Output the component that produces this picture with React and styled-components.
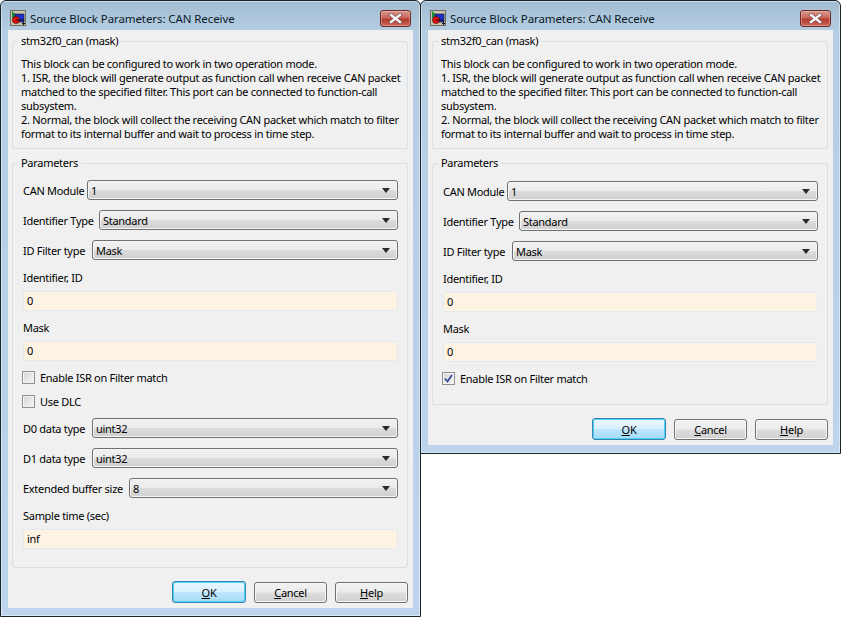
import React from "react";
import styled, { createGlobalStyle } from "styled-components";

const GlobalStyle = createGlobalStyle`
  html, body { margin: 0; padding: 0; background: #fff; }
  body { font-family: "Noto Sans", "Liberation Sans", sans-serif; font-size: 11px; letter-spacing: -0.29px; color: #000; }
`;

const description = [
  "This block can be configured to work in two operation mode.",
  "1. ISR, the block will generate output as function call when receive CAN packet",
  "matched to the specified filter. This port can be connected to function-call",
  "subsystem.",
  "2. Normal, the block will collect the receiving CAN packet which match to filter",
  "format to its internal buffer and wait to process in time step.",
];

const Desktop = styled.div`
  display: flex;
  align-items: flex-start;
  width: 850px;
  height: 617px;
  overflow: hidden;
`;
const Window = styled.div`
  box-sizing: border-box;
  width: 421px;
  height: ${(p) => p.$height}px;
  flex: none;
  display: flex;
  flex-direction: column;
  margin-left: ${(p) => (p.$overlap ? -1 : 0)}px;
  border: 1px solid #16242c;
  border-radius: 6px 6px 0 0;
  padding: 0 7px 8px;
  background: linear-gradient(180deg, #a3bdd3 0, #b4cde3 30px, #bcd4ec 100%);
  box-shadow: inset 0 0 0 1px rgba(255, 255, 255, 0.45);
`;
const TitleBar = styled.div`
  flex: none;
  box-sizing: border-box;
  height: 29px;
  display: flex;
  align-items: flex-start;
  gap: 4px;
  padding: 9px 0 0 2px;
`;
const TitleText = styled.span`
  font-size: 11.5px;
  line-height: 18px;
  letter-spacing: -0.09px;
  color: #0c1a26;
`;
const CloseButton = styled.div`
  margin-left: auto;
  margin-right: 2px;
  width: 31px;
  height: 17px;
  box-sizing: border-box;
  display: flex;
  align-items: center;
  justify-content: center;
  border: 1px solid #6d2a24;
  border-radius: 3px;
  box-shadow: inset 0 0 0 1px rgba(255, 220, 210, 0.35);
  background: linear-gradient(180deg, #d99a90 0, #c8665a 45%, #b23a2c 55%, #c86a5e 100%);
`;
const Body = styled.div`
  flex: 1;
  min-height: 0;
  display: flex;
  flex-direction: column;
  background: #f0f0f0;
  padding: 4px 5px 0 4px;
`;
const Group = styled.fieldset`
  margin: 0;
  padding: 0;
  min-width: 0;
  border: 1px solid #d5dfe5;
  border-radius: 3px;
  flex: ${(p) => (p.$grow ? 1 : "none")};
  & + & { margin-top: 7px; }
`;
const Legend = styled.legend`
  margin-left: 5px;
  padding: 0 3px;
  line-height: 14px;
`;
const Description = styled.div`
  padding: 9px 0 7px 8px;
  line-height: 14px;
  white-space: nowrap;
`;
const Params = styled.div`
  padding: ${(p) => p.$top}px 9px 0 10px;
`;
const Row = styled.div`
  display: flex;
  align-items: center;
  height: 20px;
  margin-top: ${(p) => p.$top ?? 10}px;
`;
const FieldLabel = styled.label`
  flex: none;
  width: ${(p) => p.$width}px;
  white-space: nowrap;
`;
const Combo = styled.div`
  flex: 1;
  height: 20px;
  box-sizing: border-box;
  display: flex;
  align-items: center;
  justify-content: space-between;
  padding: 0 7px 0 3px;
  border: 1px solid #707070;
  border-radius: 3px;
  box-shadow: inset 0 0 0 1px #f6f6f6;
  background: linear-gradient(180deg, #f2f2f2 0, #ebebeb 48%, #dcdcdc 52%, #cfcfcf 100%);
`;
const Arrow = styled.span`
  width: 0;
  height: 0;
  border-left: 4px solid transparent;
  border-right: 4px solid transparent;
  border-top: 5px solid #2a2a2a;
`;
const TextLabel = styled.div`
  height: 14px;
  line-height: 14px;
  margin-top: ${(p) => p.$top ?? 10}px;
`;
const TextField = styled.div`
  height: 20px;
  box-sizing: border-box;
  margin-top: 6px;
  padding-left: 3px;
  line-height: 18px;
  background: #fdf3e2;
  border: 1px solid #e3e9ef;
  border-radius: 1px;
`;
const CheckRow = styled.div`
  display: flex;
  align-items: center;
  gap: 5px;
  height: 14px;
  margin: ${(p) => p.$top ?? 10}px 0 0 -1px;
`;
const CheckBox = styled.span`
  width: 13px;
  height: 13px;
  box-sizing: border-box;
  display: flex;
  align-items: center;
  justify-content: center;
  border: 1px solid #8e8f8f;
  box-shadow: inset 0 0 0 1px #f4f4f4;
  background: linear-gradient(135deg, #d4d4d4, #f6f6f6);
`;
const Footer = styled.div`
  flex: none;
  box-sizing: border-box;
  height: 40px;
  display: flex;
  align-items: center;
  justify-content: flex-end;
  gap: 8px;
  padding-top: 8px;
`;
const Button = styled.div`
  box-sizing: border-box;
  width: ${(p) => (p.$primary ? 74 : 73)}px;
  height: ${(p) => (p.$primary ? 22 : 21)}px;
  display: flex;
  align-items: center;
  justify-content: center;
  border-radius: 3px;
  border: 1px solid ${(p) => (p.$primary ? "#3c7fb1" : "#707070")};
  box-shadow: inset 0 0 0 1px ${(p) => (p.$primary ? "#48d6f4" : "#f8f8f8")};
  background: ${(p) =>
    p.$primary
      ? "linear-gradient(180deg, #eaf6fd 0, #d9f0fc 48%, #bee6fd 52%, #a7d9f5 100%)"
      : "linear-gradient(180deg, #f2f2f2 0, #ebebeb 48%, #dddddd 52%, #cfcfcf 100%)"};
`;
const Key = styled.span`
  text-decoration: underline;
`;

const WindowIcon = () => (
  <svg width="16" height="16" viewBox="0 0 16 16">
    <rect x="0.5" y="0.5" width="15" height="15" fill="#c9c5b2" stroke="#6b6b5e" />
    <path d="M2 1 L10 8 L2 8 Z" fill="#1a8f3a" />
    <rect x="5" y="4" width="9" height="8" fill="#1f2fd0" stroke="#111" strokeWidth="0.6" />
    <circle cx="6" cy="10" r="3.6" fill="#e01010" stroke="#3a0a0a" strokeWidth="0.6" />
    <path d="M6 10 H14 M12 13.5 H15 M13.5 12 V15" stroke="#111" strokeWidth="1" />
  </svg>
);

const CloseIcon = () => (
  <svg width="15" height="11" viewBox="0 0 15 11">
    <path d="M3 2 L12 9 M12 2 L3 9" stroke="#7d4a44" strokeWidth="3.8" strokeLinecap="square" />
    <path d="M3 2 L12 9 M12 2 L3 9" stroke="#f4f4f4" strokeWidth="2.4" strokeLinecap="square" />
  </svg>
);

const Tick = () => (
  <svg width="9" height="9" viewBox="0 0 9 9">
    <path d="M1 4.5 L3.5 7.5 L8 1" fill="none" stroke="#3c4f9a" strokeWidth="1.8" />
  </svg>
);

const ComboRow = ({ label, width, value, top }) => (
  <Row $top={top}>
    <FieldLabel $width={width}>{label}</FieldLabel>
    <Combo>
      <span>{value}</span>
      <Arrow />
    </Combo>
  </Row>
);

const Field = ({ label, value, top }) => (
  <>
    <TextLabel $top={top}>{label}</TextLabel>
    <TextField>{value}</TextField>
  </>
);

const Check = ({ label, checked, top }) => (
  <CheckRow $top={top}>
    <CheckBox>{checked && <Tick />}</CheckBox>
    <span>{label}</span>
  </CheckRow>
);

const Dialog = ({ height, overlap, paramsTop, children }) => (
  <Window $height={height} $overlap={overlap}>
    <TitleBar>
      <WindowIcon />
      <TitleText>Source Block Parameters: CAN Receive</TitleText>
      <CloseButton>
        <CloseIcon />
      </CloseButton>
    </TitleBar>
    <Body>
      <Group>
        <Legend>stm32f0_can (mask)</Legend>
        <Description>
          {description.map((line) => (
            <div key={line}>{line}</div>
          ))}
        </Description>
      </Group>
      <Group $grow>
        <Legend>Parameters</Legend>
        <Params $top={paramsTop}>{children}</Params>
      </Group>
      <Footer>
        <Button $primary>
          <span><Key>O</Key>K</span>
        </Button>
        <Button>
          <span><Key>C</Key>ancel</span>
        </Button>
        <Button>
          <span><Key>H</Key>elp</span>
        </Button>
      </Footer>
    </Body>
  </Window>
);

const CommonFields = () => (
  <>
    <ComboRow top={0} label="CAN Module" width={64} value="1" />
    <ComboRow label="Identifier Type" width={76} value="Standard" />
    <ComboRow label="ID Filter type" width={69} value="Mask" />
    <Field top={11} label="Identifier, ID" value="0" />
    <Field label="Mask" value="0" />
  </>
);

export default function App() {
  return (
    <Desktop>
      <GlobalStyle />
      <Dialog height={617} paramsTop={10}>
        <CommonFields />
        <Check top={9} label="Enable ISR on Filter match" />
        <Check label="Use DLC" />
        <ComboRow label="D0 data type" width={69} value="uint32" />
        <ComboRow label="D1 data type" width={69} value="uint32" />
        <ComboRow label="Extended buffer size" width={106} value="8" />
        <Field top={11} label="Sample time (sec)" value="inf" />
      </Dialog>
      <Dialog height={454} overlap paramsTop={11}>
        <CommonFields />
        <Check top={9} label="Enable ISR on Filter match" checked />
      </Dialog>
    </Desktop>
  );
}
